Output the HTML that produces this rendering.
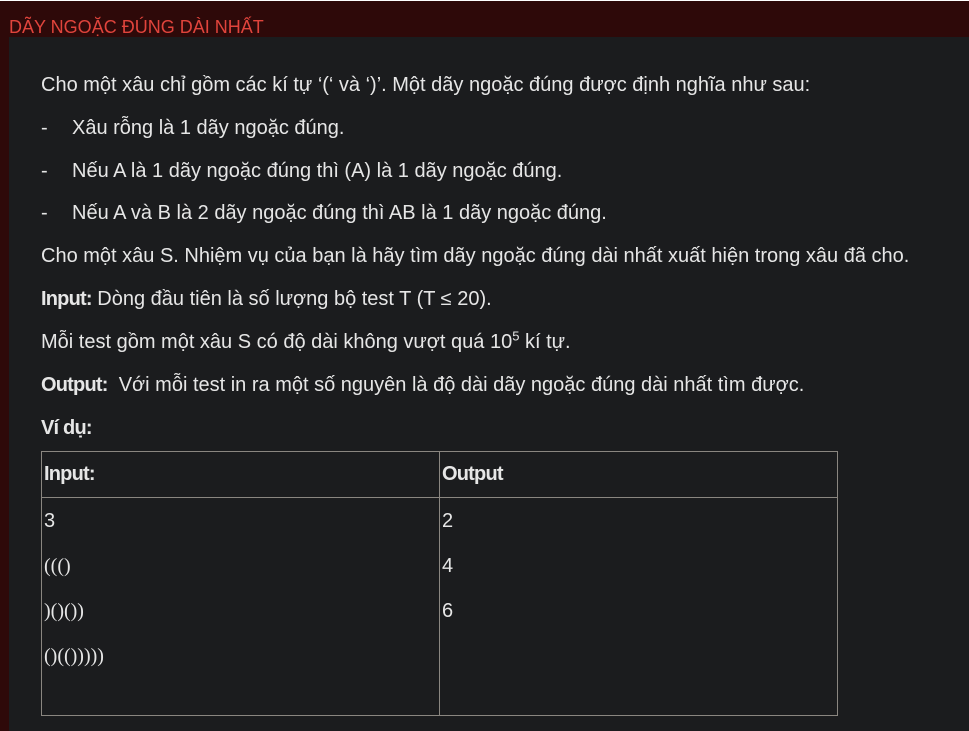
<!DOCTYPE html>
<html><head><meta charset="utf-8"><style>
html,body{margin:0;padding:0;width:969px;height:731px;overflow:hidden;background:#2e0909;font-family:"Liberation Sans","DejaVu Sans",sans-serif;}
.top{position:absolute;left:0;top:0;width:969px;height:1px;background:#fff}
.title{position:absolute;left:9px;top:17px;color:#e0443c;font-size:18px}
.panel{position:absolute;left:9px;top:37px;width:960px;height:694px;background:#1b1c1e}
.l{position:absolute;left:41px;color:#e6e6e6;font-size:20px;white-space:nowrap;line-height:22px}
.b{left:72px}
b{font-weight:bold;letter-spacing:-0.8px}
table{position:absolute;left:41px;top:451px;border-collapse:collapse;color:#e6e6e6;font-size:20px}
td{border:1px solid #8a8680;vertical-align:top;padding:0 2px}
.par{font-family:"Liberation Serif",serif;font-size:20px}
</style></head><body>
<div class="top"></div>
<div class="title">DÃY NGOẶC ĐÚNG DÀI NHẤT</div>
<div class="panel"></div>
<div class="l" style="top:74px">Cho một xâu chỉ gồm các kí tự ‘(‘ và ‘)’. Một dãy ngoặc đúng được định nghĩa như sau:</div>
<div class="l" style="top:117px">-</div><div class="l b" style="top:117px">Xâu rỗng là 1 dãy ngoặc đúng.</div>
<div class="l" style="top:160px">-</div><div class="l b" style="top:160px">Nếu A là 1 dãy ngoặc đúng thì (A) là 1 dãy ngoặc đúng.</div>
<div class="l" style="top:202px">-</div><div class="l b" style="top:202px">Nếu A và B là 2 dãy ngoặc đúng thì AB là 1 dãy ngoặc đúng.</div>
<div class="l" style="top:245px">Cho một xâu S. Nhiệm vụ của bạn là hãy tìm dãy ngoặc đúng dài nhất xuất hiện trong xâu đã cho.</div>
<div class="l" style="top:288px"><b>Input:</b> Dòng đầu tiên là số lượng bộ test T (T ≤ 20).</div>
<div class="l" style="top:331px">Mỗi test gồm một xâu S có độ dài không vượt quá 10<sup style="font-size:13px;line-height:0">5</sup> kí tự.</div>
<div class="l" style="top:374px"><b>Output:</b>&nbsp; Với mỗi test in ra một số nguyên là độ dài dãy ngoặc đúng dài nhất tìm được.</div>
<div class="l" style="top:417px"><b>Ví dụ:</b></div>
<table>
<tr style="height:46px"><td style="width:393px;vertical-align:middle"><b>Input:</b></td><td style="width:393px;vertical-align:middle"><b>Output</b></td></tr>
<tr style="height:218px"><td style="padding-top:1px;line-height:45px">3<br><span class="par">((()</span><br><span class="par">)()())</span><br><span class="par">()(()))))</span></td><td style="padding-top:1px;line-height:45px">2<br>4<br>6</td></tr>
</table>
</body></html>
